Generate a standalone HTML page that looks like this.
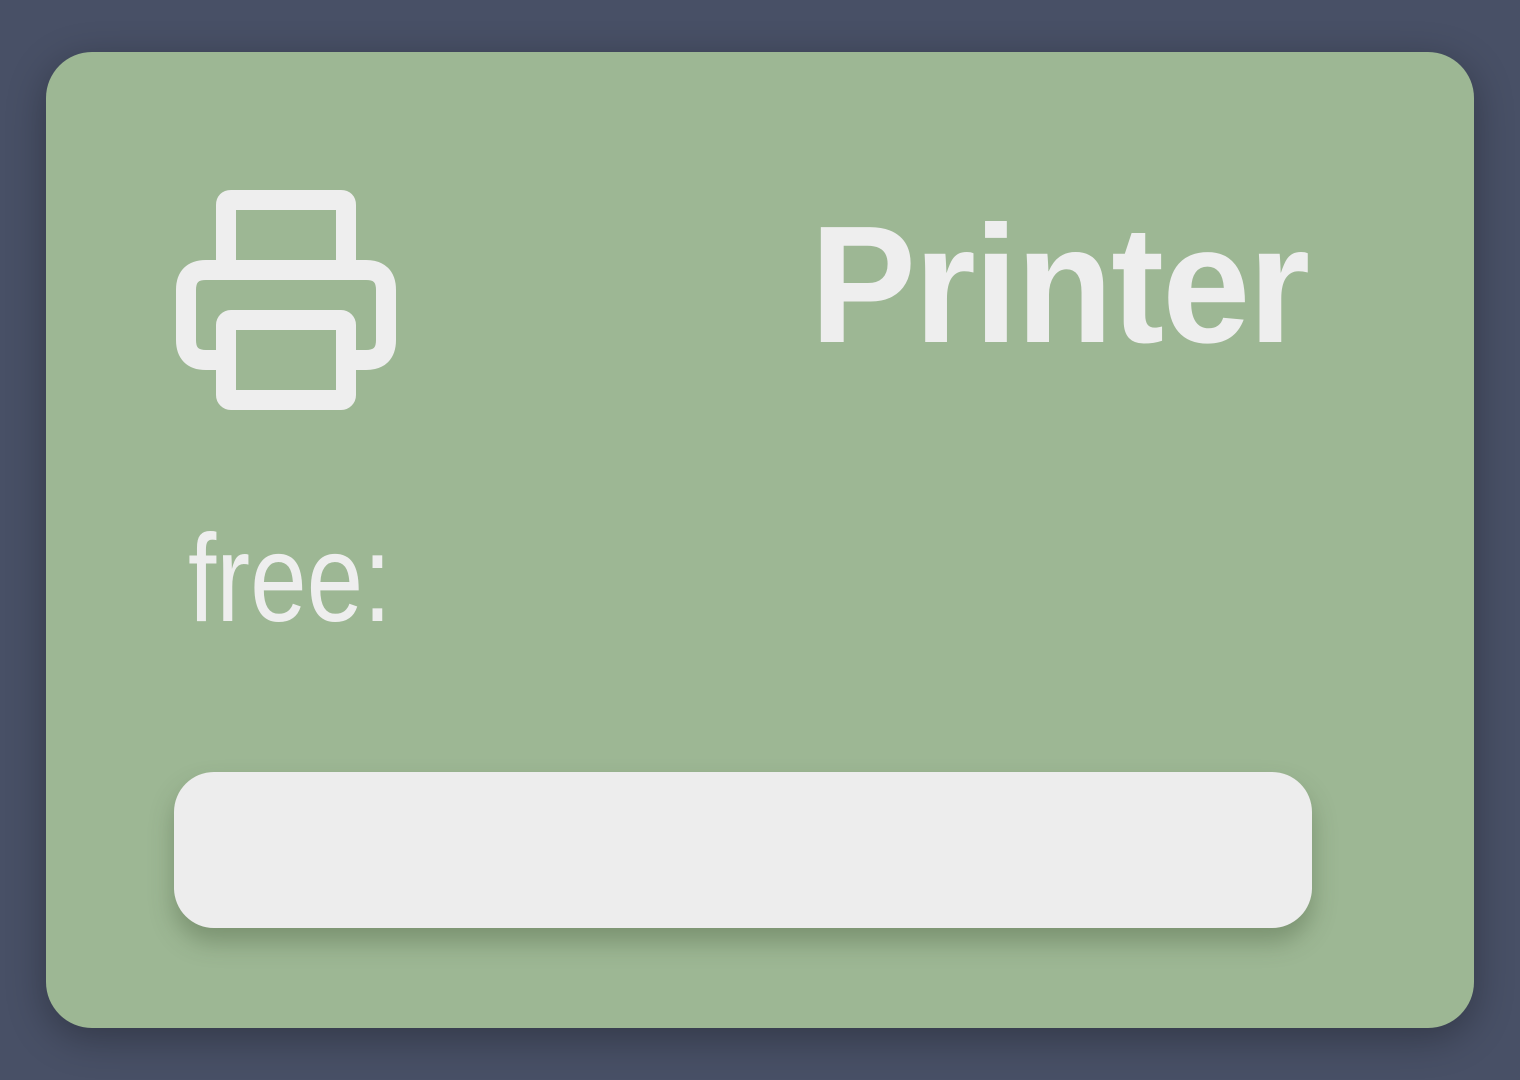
<!DOCTYPE html>
<html><head><style>
html,body{margin:0;padding:0;}
body{width:1520px;height:1080px;background:#485066;position:relative;overflow:hidden;font-family:"Liberation Sans",sans-serif;}
.card{position:absolute;left:46px;top:52px;width:1428px;height:976px;border-radius:46px;background:#9db794;box-shadow:0 10px 40px rgba(0,0,0,0.3);}
.title{position:absolute;right:212px;top:202px;font-size:167px;font-weight:bold;color:#eeeeee;line-height:1;white-space:nowrap;transform:scaleX(0.95);transform-origin:right top;letter-spacing:-2px;}
.free{position:absolute;left:188px;top:517px;font-size:124px;color:#eeeeee;line-height:1;white-space:nowrap;transform:scaleX(0.82);transform-origin:left top;}
.bar{position:absolute;left:174px;top:772px;width:1138px;height:156px;border-radius:40px;background:#ededed;box-shadow:0 14px 24px rgba(60,80,50,0.35);}
svg{position:absolute;left:0;top:0;}
</style></head><body>
<div class="card"></div>
<svg width="1520" height="1080" fill="none" stroke="#eeeeee" stroke-width="20" stroke-linejoin="round">
<path d="M226 270 V205 q0-5 5-5 h110 q5 0 5 5 V270"/>
<path d="M226 360 H206 q-20 0-20-20 V290 q0-20 20-20 H366 q20 0 20 20 V340 q0 20-20 20 H346"/>
<rect x="226" y="320" width="120" height="80" rx="5"/>
</svg>
<div class="title">Printer</div>
<div class="free">free:</div>
<div class="bar"></div>
</body></html>
